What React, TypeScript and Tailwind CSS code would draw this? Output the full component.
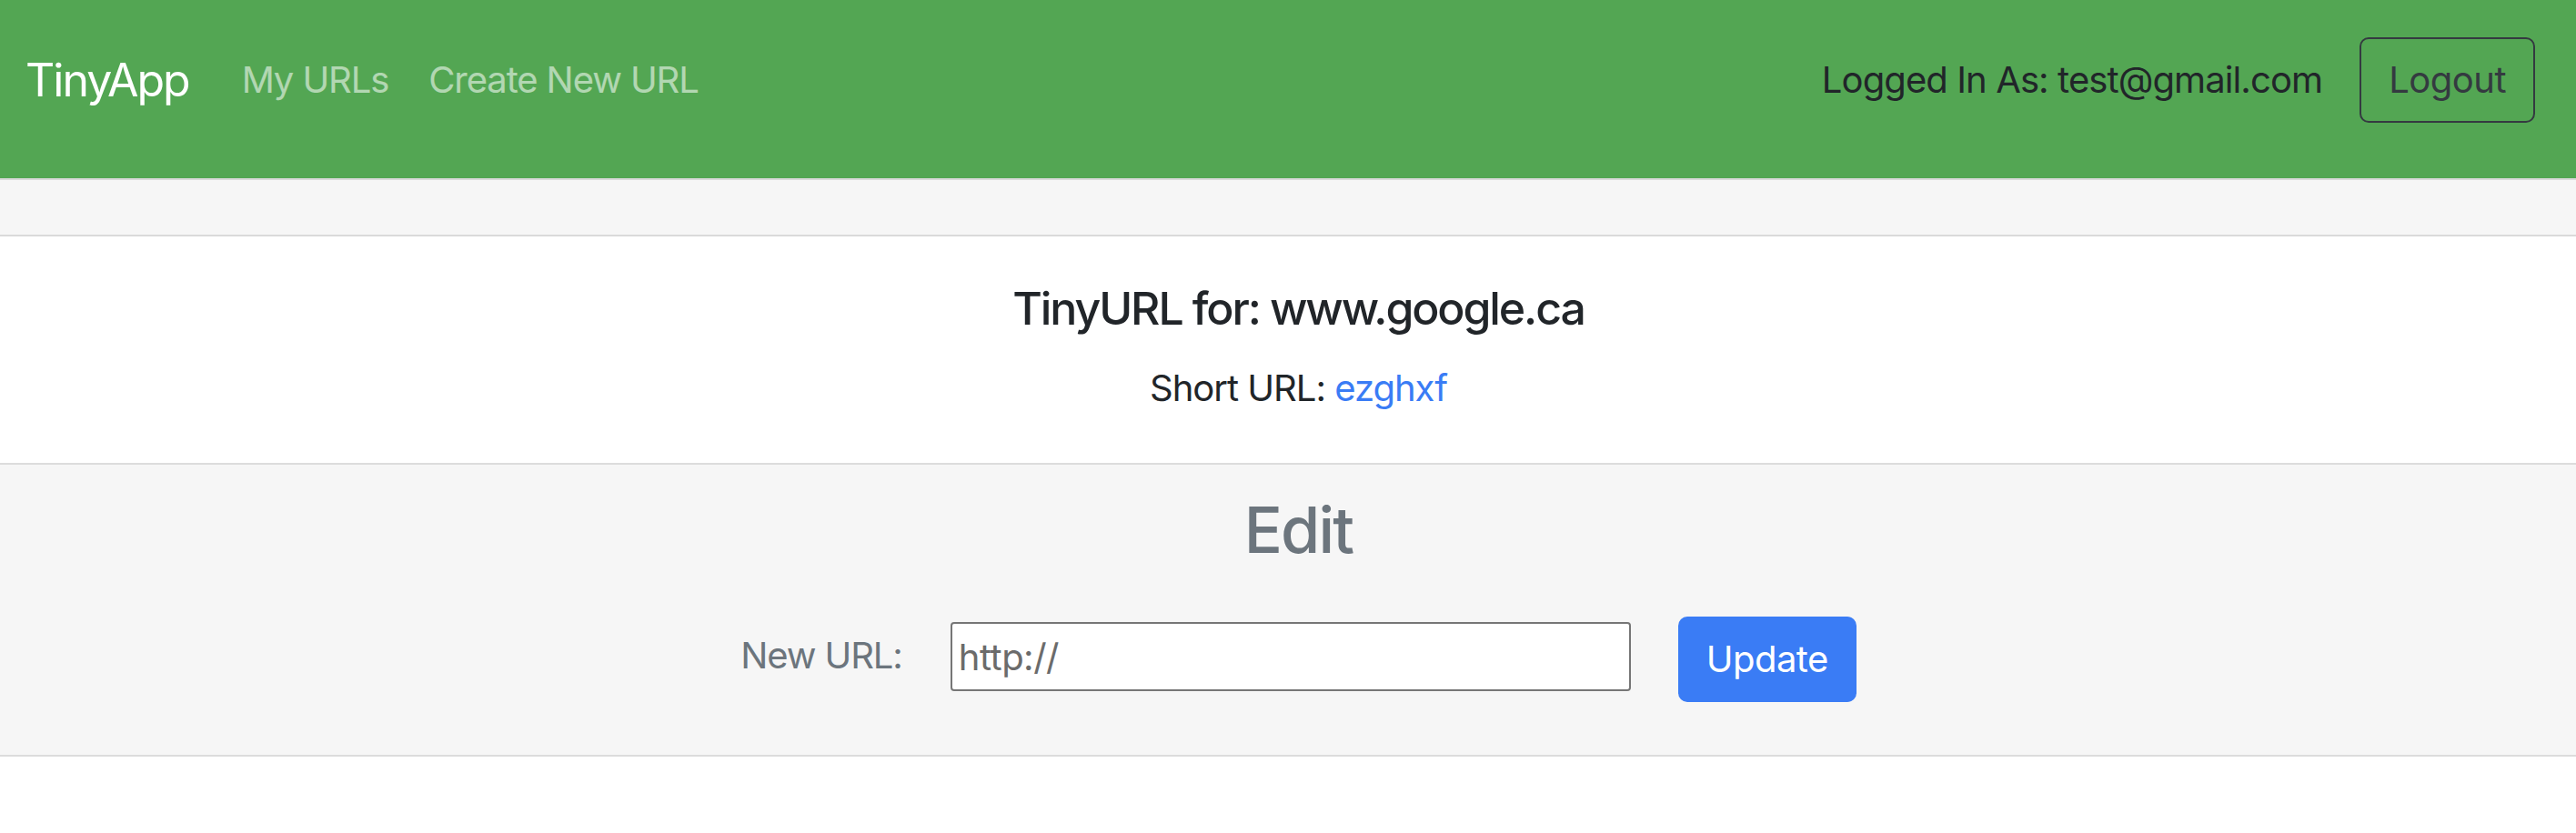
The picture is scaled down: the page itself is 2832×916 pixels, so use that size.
export default function App() {
  return (
    <div className="min-h-screen bg-white font-['Inter','Liberation_Sans',sans-serif] text-[#212529]">
      <nav className="h-[196px] bg-[#53a653] pl-[28px] pr-[45px] pt-[41px]">
        <div className="flex h-[94px] items-center">
          <a href="#" className="mr-[58px] text-[50px] leading-[75px] tracking-[-2px] text-white">
            TinyApp
          </a>
          <ul className="flex items-center gap-[44px] text-[40px] leading-[60px] tracking-[-1.1px] text-white/55">
            <li>
              <a href="#">My URLs</a>
            </li>
            <li>
              <a href="#">Create New URL</a>
            </li>
          </ul>
          <div className="ml-auto flex items-center gap-[41px]">
            <span className="text-[40px] leading-[60px] tracking-[-0.9px] text-[#212529]">
              Logged In As: test@gmail.com
            </span>
            <button className="h-[94px] rounded-[10px] border-[2.5px] border-[#343a40] px-[30px] text-[40px] leading-[60px] tracking-[-0.5px] text-[#343a40]">
              Logout
            </button>
          </div>
        </div>
      </nav>

      <div className="h-[64px] border-y-2 border-y-[#dadada] bg-[#f6f6f6]" />

      <section className="flex flex-col items-center bg-white pt-[49px] pb-[52px] pl-[23px]">
        <h5 className="text-[50px] font-medium leading-[60px] tracking-[-2.1px]">TinyURL for: www.google.ca</h5>
        <p className="mt-[28px] text-[40px] leading-[60px] tracking-[-1px]">
          Short URL: <a href="#" className="text-[#3a7cf5]">ezghxf</a>
        </p>
      </section>

      <section className="flex flex-col items-center border-y-2 border-y-[#dcdcdc] bg-[#f6f6f6] pt-[30px] pb-[58px] pl-[23px]">
        <h3 className="text-[70px] font-medium leading-[84px] tracking-[-1.8px] text-[#6c757d]">Edit</h3>
        <form className="mt-[53px] flex items-start" onSubmit={(e) => e.preventDefault()}>
          <label className="mt-[13px] text-[40px] leading-[60px] tracking-[-1.1px] text-[#6c757d]">New URL:</label>
          <input
            type="text"
            defaultValue="http://"
            className="ml-[53px] mt-[6px] h-[76px] w-[748px] rounded-[4px] border-2 border-[#767676] bg-white px-[7px] text-[40px] tracking-[-0.5px] text-[#6b6b6b] outline-none"
          />
          <button className="ml-[52px] h-[94px] w-[196px] rounded-[10px] bg-[#3a7cf5] text-[40px] leading-[60px] tracking-[-0.5px] text-white">
            Update
          </button>
        </form>
      </section>
    </div>
  )
}
